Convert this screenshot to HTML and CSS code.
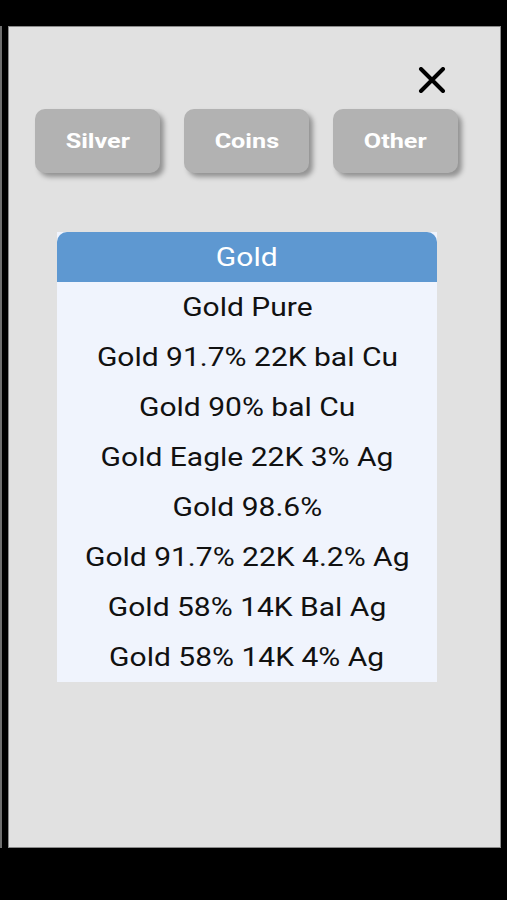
FILE: index.html
```html
<!DOCTYPE html>
<html lang="en">
<head>
  <meta charset="UTF-8">
  <meta name="viewport" content="width=device-width, initial-scale=1.0">
  <title>Alloy Picker</title>
  <link rel="stylesheet" href="styles.css">
</head>
<body>

<div class="screen">
  <div class="edge"></div>

  <div class="dialog">
    <div class="dialog-top">
      <button class="close-btn" aria-label="Close">
        <svg width="28" height="26" viewBox="0 0 28 26">
          <path d="M3 2 L25 24 M25 2 L3 24" stroke="#000" stroke-width="4" stroke-linecap="round"/>
        </svg>
      </button>
    </div>

    <div class="tabs">
      <button class="tab"><span class="wide">Silver</span></button>
      <button class="tab"><span class="wide">Coins</span></button>
      <button class="tab"><span class="wide">Other</span></button>
    </div>

    <div class="alloy-list">
      <div class="list-head"><span class="wide">Gold</span></div>
      <div class="list-item"><span class="wide">Gold Pure</span></div>
      <div class="list-item"><span class="wide">Gold 91.7% 22K bal Cu</span></div>
      <div class="list-item"><span class="wide">Gold 90% bal Cu</span></div>
      <div class="list-item"><span class="wide">Gold Eagle 22K 3% Ag</span></div>
      <div class="list-item"><span class="wide">Gold 98.6%</span></div>
      <div class="list-item"><span class="wide">Gold 91.7% 22K 4.2% Ag</span></div>
      <div class="list-item"><span class="wide">Gold 58% 14K Bal Ag</span></div>
      <div class="list-item"><span class="wide">Gold 58% 14K 4% Ag</span></div>
    </div>
  </div>
</div>

</body>
</html>
```

FILE: styles.css
```css
:root {
  --panel: #e1e1e1;
  --tab: #b2b2b2;
  --head: #5e98d1;
  --list-bg: #f0f4fd;
}

body {
  margin: 0;
  padding: 0;
  background: #000;
  font-family: Roboto, 'Liberation Sans', Arial, sans-serif;
  width: 507px;
  height: 900px;
  overflow: hidden;
}

.screen {
  display: flex;
  padding-top: 26px;
}

.edge {
  width: 2px;
  height: 822px;
  background: #6e6e6e;
  margin-right: 6px;
}

.dialog {
  width: 491px;
  height: 820px;
  background: var(--panel);
  border: 1px solid #8a8a8a;
}

.dialog-top {
  display: flex;
  justify-content: flex-end;
  height: 82px;
  padding-right: 54px;
}

.close-btn {
  background: none;
  border: none;
  padding: 0;
  margin-top: 40px;
  width: 28px;
  height: 26px;
  cursor: pointer;
}

.close-btn svg {
  display: block;
}

/* the screen capture is stretched sideways, so the labels are too */
.wide {
  display: inline-block;
  transform: scaleX(1.2);
}

.tabs {
  display: flex;
  gap: 24px;
  padding-left: 26px;
}

.tab {
  width: 125px;
  height: 64px;
  padding-top: 1px;
  border: none;
  border-radius: 10px;
  background: var(--tab);
  color: #fff;
  font-family: Roboto, 'Liberation Sans', Arial, sans-serif;
  font-weight: 700;
  font-size: 21px;
  box-shadow: 4px 4px 5px rgba(0, 0, 0, 0.35);
  cursor: pointer;
}

.alloy-list {
  width: 380px;
  margin-top: 59px;
  margin-left: 48px;
  background: var(--list-bg);
}

.list-head {
  height: 49px;
  padding-top: 1px;
  line-height: 49px;
  background: var(--head);
  color: #fff;
  text-align: center;
  font-size: 25px;
  border-radius: 10px 10px 0 0;
}

.list-item {
  height: 48px;
  padding-top: 2px;
  line-height: 48px;
  text-align: center;
  font-size: 25px;
  color: #111;
}
```
